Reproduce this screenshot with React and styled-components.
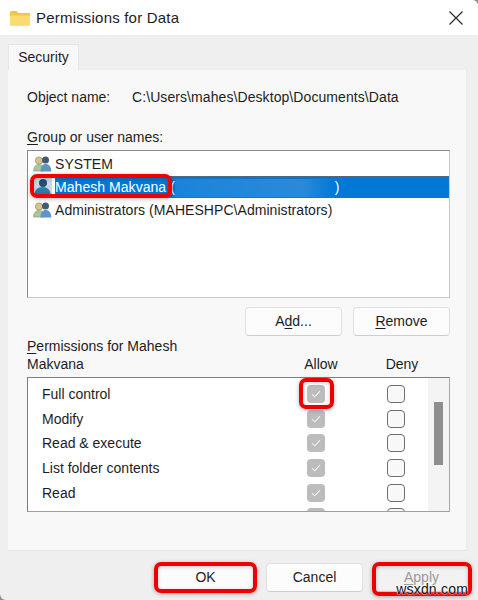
import React from "react";
import styled, { createGlobalStyle } from "styled-components";

const Global = createGlobalStyle`
  html, body { margin: 0; padding: 0; background: #8f8f8f; }
  * { box-sizing: border-box; }
`;

const Window = styled.div`
  position: relative;
  width: 478px;
  height: 600px;
  overflow: hidden;
  display: flex;
  flex-direction: column;
  background: #efefef;
  border-bottom-left-radius: 6px;
  border-top-right-radius: 6px;
  font-family: "Liberation Sans", Arial, sans-serif;
  font-size: 14px;
  color: #1d1d1d;
`;
const TitleBar = styled.div`
  height: 35px;
  flex: none;
  background: #fff;
  display: flex;
  align-items: center;
  padding: 0 15px 0 10px;
  gap: 6px;
  font-size: 15px;
  letter-spacing: 0.2px;
`;
const Title = styled.span`
  flex: 1;
`;
const Tabs = styled.div`
  height: 35px;
  flex: none;
  padding: 9px 0 0 8px;
  display: flex;
  align-items: flex-end;
`;
const Tab = styled.div`
  width: 71px;
  height: 26px;
  background: #f8f8f8;
  border: 1px solid #e6e6e6;
  border-bottom: none;
  display: flex;
  align-items: center;
  justify-content: center;
  padding-bottom: 1px;
`;
const Panel = styled.div`
  width: 459px;
  height: 481px;
  margin-left: 8px;
  flex: none;
  background: #f8f8f8;
  border-right: 1px solid #ececec;
  border-bottom: 1px solid #e6e6e6;
  padding: 19px 16px 0 19px;
  display: flex;
  flex-direction: column;
`;
const ObjectRow = styled.div`
  display: flex;
  height: 16px;
  line-height: 16px;
  white-space: nowrap;
  gap: 22px;
`;
const ObjectLabel = styled.span`
  width: 83px;
`;
const ObjectPath = styled.span`
  letter-spacing: 0.08px;
`;
const Label = styled.div`
  line-height: 18px;
  margin-top: ${(p) => p.$top}px;
  margin-bottom: ${(p) => p.$bottom || 0}px;
`;
const Key = styled.u`
  text-decoration-thickness: 1px;
  text-underline-offset: 2px;
`;
const UserList = styled.div`
  width: 423px;
  height: 148px;
  flex: none;
  background: #fff;
  border: 1px solid #8a8a8a;
  border-right-color: #c8c8c8;
  border-bottom-color: #c8c8c8;
  padding-top: 1px;
  display: flex;
  flex-direction: column;
`;
const UserRow = styled.div`
  height: 23px;
  display: flex;
  align-items: center;
  padding-left: 5px;
  gap: 3px;
  white-space: nowrap;
  letter-spacing: 0.05px;
`;
const UserText = styled.span`
  padding: 0 2px 0 0;
  height: 22px;
  line-height: 22px;
  flex: ${(p) => (p.$selected ? 1 : "none")};
  background: ${(p) => (p.$selected ? "#0078d7" : "transparent")};
  color: ${(p) => (p.$selected ? "#fff" : "#1d1d1d")};
  outline: ${(p) => (p.$selected ? "1px dotted #5a6a78" : "none")};
  outline-offset: -1px;
`;
const Blur = styled.span`
  display: inline-block;
  width: 160px;
  height: 18px;
  vertical-align: middle;
  background: linear-gradient(90deg, #1a84da, #2a8ada 80%, #0078d7);
`;
const ButtonRow = styled.div`
  display: flex;
  justify-content: flex-end;
  gap: 11px;
  margin-top: 9px;
`;
const Button = styled.div`
  width: ${(p) => p.$width || 97}px;
  height: 29px;
  background: ${(p) => (p.$disabled ? "#f2f2f2" : "#fcfcfc")};
  border: 1px solid ${(p) => (p.$disabled ? "#e8e8e8" : "#e0e0e0")};
  border-bottom-color: #cfcfcf;
  border-radius: 4px;
  display: flex;
  align-items: center;
  justify-content: center;
  padding-bottom: 1px;
  color: ${(p) => (p.$disabled ? "#9a9a9a" : "#1d1d1d")};
`;
const PermHeader = styled.div`
  display: grid;
  grid-template-columns: 285px 18px 63px 18px;
  align-items: end;
  height: 41px;
  padding-bottom: 4px;
  line-height: 18px;
`;
const PermTitle = styled.div`
  width: 170px;
`;
const ColName = styled.div`
  width: 18px;
  display: flex;
  justify-content: center;
  white-space: nowrap;
`;
const PermBox = styled.div`
  width: 423px;
  height: 135px;
  flex: none;
  background: #fff;
  border: 1px solid #7e7e7e;
  border-right-color: #a8a8a8;
  border-bottom-color: #a0a0a0;
  display: flex;
  overflow: hidden;
`;
const PermList = styled.div`
  flex: 1;
  padding-top: 4px;
`;
const PermRow = styled.div`
  height: 24.6px;
  display: grid;
  grid-template-columns: 265px 18px 62px 18px;
  align-items: center;
  padding-left: 14px;
`;
const CheckBox = styled.div`
  width: 18px;
  height: 18px;
  border-radius: 4px;
  display: flex;
  align-items: center;
  justify-content: center;
  background: ${(p) => (p.$on ? "#bcbcbc" : "#f8f8f8")};
  border: ${(p) => (p.$on ? "none" : "1px solid #6e6e6e")};
`;
const Track = styled.div`
  width: 21px;
  flex: none;
  background: #f4f4f4;
  padding: 24px 6px 0 6px;
`;
const Thumb = styled.div`
  height: 63px;
  background: #8e8e8e;
`;
const Footer = styled.div`
  flex: 1;
  display: flex;
  justify-content: flex-end;
  gap: 12px;
  padding: 12px 10px 0 0;
`;
const Mark = styled.div`
  position: absolute;
  left: ${(p) => p.$x}px;
  top: ${(p) => p.$y}px;
  width: ${(p) => p.$w}px;
  height: ${(p) => p.$h}px;
  border: 4px solid #ee0000;
  border-radius: 7px;
  box-shadow: 0 1px 4px rgba(0,0,0,.3), inset 0 1px 4px rgba(0,0,0,.2);
  pointer-events: none;
`;
const Watermark = styled.div`
  position: absolute;
  right: 10px;
  top: 581px;
  font-size: 14px;
  line-height: 16px;
  letter-spacing: 0.2px;
  color: #111;
  text-shadow: 0 0 2px #fff, 0 0 2px #fff;
`;

const Folder = () => (
  <svg width="20" height="16" viewBox="0 0 20 16">
    <path d="M0 2.500C0 1.500.6 1 1.500 1h5l2 2h10c1 0 1.500.6 1.500 1.500V14c0 1-.6 1.500-1.500 1.500h-17C.6 15.500 0 15 0 14z" fill="#f5c63f" />
    <path d="M0 5.500h20V14c0 1-.6 1.500-1.500 1.500h-17C.6 15.500 0 15 0 14z" fill="#fadb70" />
  </svg>
);
const CloseIcon = () => (
  <svg width="14" height="14" viewBox="0 0 14 14">
    <path d="M.5.5l13 13M13.500.5L.5 13.500" stroke="#2b2b2b" strokeWidth="1.200" fill="none" />
  </svg>
);
const GroupIcon = () => (
  <svg width="19" height="18" viewBox="0 0 19 18">
    <circle cx="6" cy="5.500" r="3.600" fill="#d8c48c" stroke="#8c8a5c" strokeWidth=".7" />
    <path d="M.6 16c0-4 2-6.500 5.400-6.500S11 11.500 11 16z" fill="#a9c59a" stroke="#7e9a74" strokeWidth=".6" />
    <circle cx="12.500" cy="5" r="3.500" fill="#3d5a78" />
    <path d="M7.500 16.500c0-5 2-7.500 5.200-7.500s5.600 2.500 5.600 7.500z" fill="#5f94c4" />
  </svg>
);
const UserIcon = () => (
  <svg width="19" height="20" viewBox="0 0 19 20">
    <rect width="19" height="20" fill="#c9d9e6" />
    <circle cx="10" cy="6" r="4" fill="#24506e" />
    <path d="M1.500 18c0-5 3-8 8-8s8 3 8 8z" fill="#2f7aa8" />
  </svg>
);
const Check = () => (
  <svg width="10" height="8" viewBox="0 0 10 8">
    <path d="M1 4.200l2.700 2.600L9 1.200" stroke="#f4f4f4" strokeWidth="1.100" fill="none" />
  </svg>
);

const perms = ["Full control", "Modify", "Read & execute", "List folder contents", "Read", ""];

export default function App() {
  return (
    <Window>
      <Global />
      <TitleBar>
        <Folder />
        <Title>Permissions for Data</Title>
        <CloseIcon />
      </TitleBar>
      <Tabs>
        <Tab>Security</Tab>
      </Tabs>
      <Panel>
        <ObjectRow>
          <ObjectLabel>Object name:</ObjectLabel>
          <ObjectPath>C:\Users\mahes\Desktop\Documents\Data</ObjectPath>
        </ObjectRow>
        <Label $top={23} $bottom={4}>
          <Key>G</Key>roup or user names:
        </Label>
        <UserList>
          <UserRow>
            <GroupIcon />
            <UserText>SYSTEM</UserText>
          </UserRow>
          <UserRow>
            <UserIcon />
            <UserText $selected>
              Mahesh Makvana (<Blur />)
            </UserText>
          </UserRow>
          <UserRow>
            <GroupIcon />
            <UserText>Administrators (MAHESHPC\Administrators)</UserText>
          </UserRow>
        </UserList>
        <ButtonRow>
          <Button>
            <span>A<Key>d</Key>d...</span>
          </Button>
          <Button>
            <span><Key>R</Key>emove</span>
          </Button>
        </ButtonRow>
        <PermHeader>
          <PermTitle>
            <Key>P</Key>ermissions for Mahesh Makvana
          </PermTitle>
          <ColName>Allow</ColName>
          <span />
          <ColName>Deny</ColName>
        </PermHeader>
        <PermBox>
          <PermList>
            {perms.map((name, i) => (
              <PermRow key={i}>
                <span>{name}</span>
                <CheckBox $on>
                  <Check />
                </CheckBox>
                <span />
                <CheckBox />
              </PermRow>
            ))}
          </PermList>
          <Track>
            <Thumb />
          </Track>
        </PermBox>
      </Panel>
      <Footer>
        <Button>OK</Button>
        <Button>Cancel</Button>
        <Button $width={93} $disabled>
          <span><Key>A</Key>pply</span>
        </Button>
      </Footer>
      <Mark $x={30} $y={174} $w={142} $h={24} />
      <Mark $x={299} $y={378} $w={35} $h={31} />
      <Mark $x={154} $y={562} $w={103} $h={31} />
      <Mark $x={372} $y={562} $w={100} $h={34} />
      <Watermark>wsxdn.com</Watermark>
    </Window>
  );
}
